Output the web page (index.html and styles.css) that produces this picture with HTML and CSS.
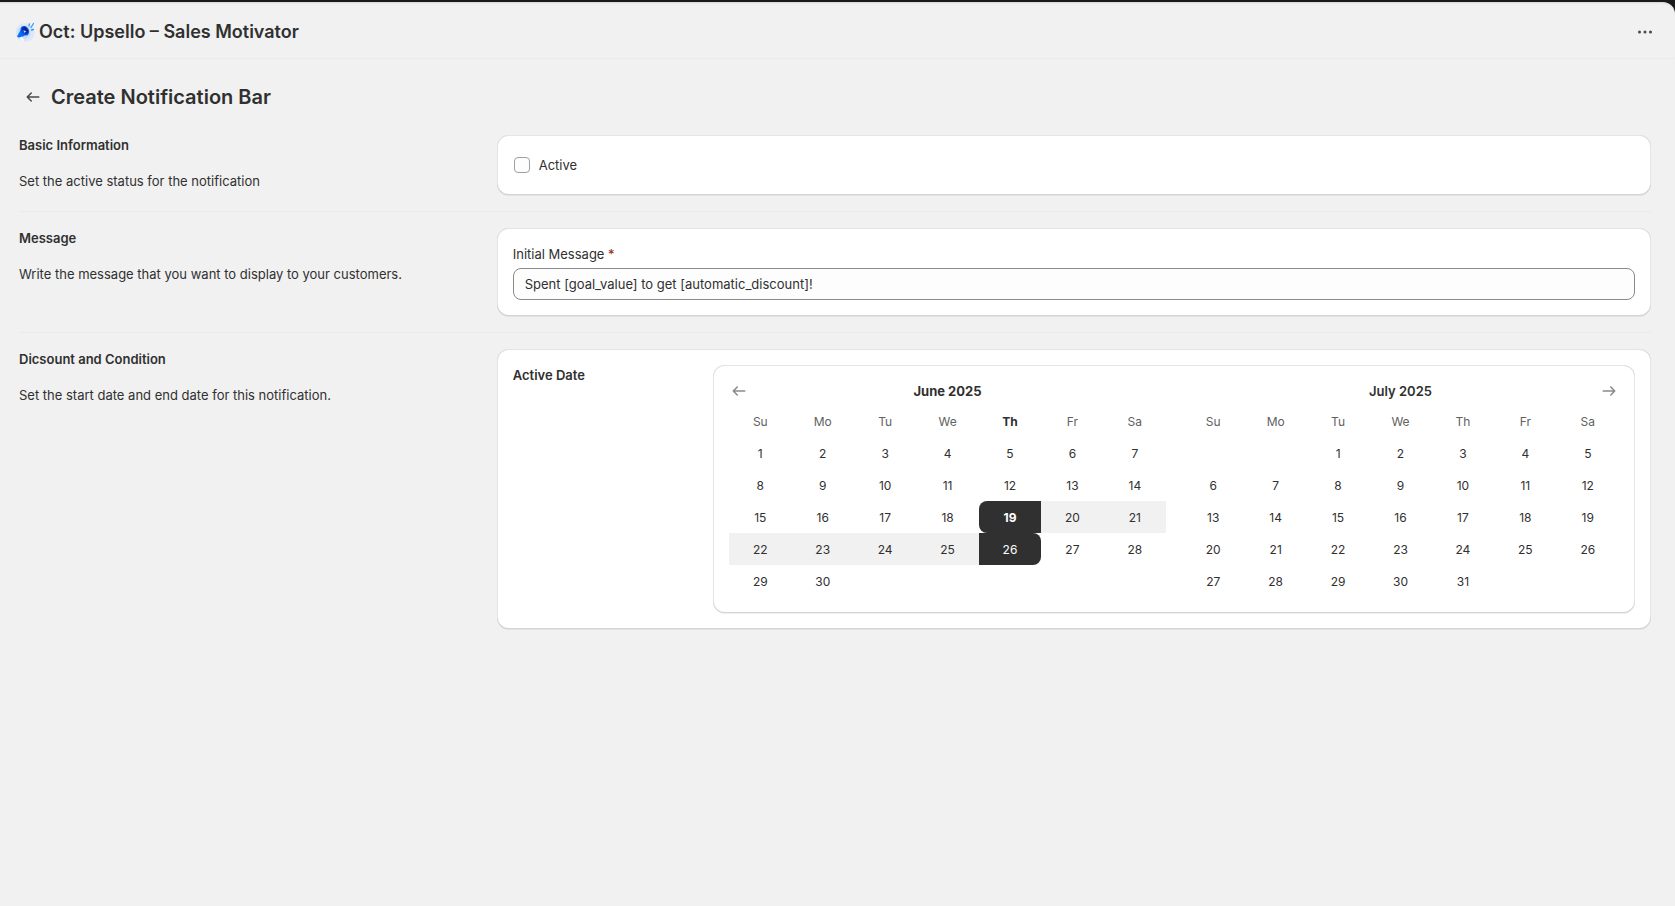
FILE: index.html
```html
<!DOCTYPE html>
<html lang="en">
<head>
    <meta charset="UTF-8">
    <meta name="viewport" content="width=device-width, initial-scale=1.0">
    <title>Create Notification Bar</title>
    <link rel="stylesheet" href="styles.css">
</head>
<body>
    <div class="frame">
        <header class="title-bar">
            <svg class="app-icon" viewBox="0 0 20 20" aria-hidden="true">
                <circle cx="10" cy="10.5" r="9.5" fill="#dce7fa"/>
                <circle cx="9" cy="10.5" r="6.5" fill="#c3d9fb"/>
                <path d="M2 14.500 7.500 5l6 8-4 .5-2.500 1.500-3.500.5z" fill="#0b6cf5"/>
                <ellipse cx="9.800" cy="8.600" rx="3.900" ry="5" transform="rotate(-36 9.800 8.600)" fill="#0b55e6"/>
                <ellipse cx="10.200" cy="8.300" rx="2.500" ry="3.700" transform="rotate(-36 10.200 8.300)" fill="#062a9c"/>
                <path d="m8.500 8 2.800 1.800-2.300 1z" fill="#cfe0ff"/>
                <path d="M4.500 16 7 14.500l2 3.500-1.500 1.500z" fill="#fff"/>
                <path d="m14 4 .3-2M16 5.500l2.500-4M16.500 8l2-.5" stroke="#3b96f7" stroke-width="1.300" stroke-linecap="round" fill="none"/>
            </svg>
            <span class="app-name">Oct: Upsello – Sales Motivator</span>
            <button type="button" class="icon-btn more-btn" aria-label="More actions">
                <svg viewBox="0 0 20 20"><circle cx="4.500" cy="10" r="1.500"/><circle cx="10" cy="10" r="1.500"/><circle cx="15.500" cy="10" r="1.500"/></svg>
            </button>
        </header>

        <main class="page">
            <div class="page-header">
                <a href="#notifications" class="icon-btn" aria-label="Back">
                    <svg viewBox="0 0 20 20"><path d="M16.5 10a.75.75 0 0 1-.75.75h-9.69l2.72 2.72a.75.75 0 0 1-1.060 1.060l-4-4a.75.75 0 0 1 0-1.060l4-4a.75.75 0 1 1 1.060 1.060l-2.72 2.72h9.69a.75.75 0 0 1 .75.75Z"/></svg>
                </a>
                <h1>Create Notification Bar</h1>
            </div>

            <section class="section">
                <div class="section-info">
                    <h2>Basic Information</h2>
                    <p>Set the active status for the notification</p>
                </div>
                <div class="card">
                    <label class="choice" for="active">
                        <input type="checkbox" id="active">
                        <span>Active</span>
                    </label>
                </div>
            </section>

            <section class="section">
                <div class="section-info">
                    <h2>Message</h2>
                    <p>Write the message that you want to display to your customers.</p>
                </div>
                <div class="card">
                    <label class="field-label" for="message">Initial Message <span class="required">*</span></label>
                    <input type="text" class="text-field" id="message" value="Spent [goal_value] to get [automatic_discount]!">
                </div>
            </section>

            <section class="section">
                <div class="section-info">
                    <h2>Dicsount and Condition</h2>
                    <p>Set the start date and end date for this notification.</p>
                </div>
                <div class="card date-row">
                    <h3>Active Date</h3>
                    <div class="card date-picker">
                        <div class="month">
                            <div class="month-header">
                                <button type="button" class="icon-btn nav-btn" aria-label="Previous month">
                                    <svg viewBox="0 0 20 20"><path d="M16.5 10a.75.75 0 0 1-.75.75h-9.69l2.72 2.72a.75.75 0 0 1-1.060 1.060l-4-4a.75.75 0 0 1 0-1.060l4-4a.75.75 0 1 1 1.060 1.060l-2.72 2.72h9.69a.75.75 0 0 1 .75.75Z"/></svg>
                                </button>
                                <span class="month-title current">June 2025</span>
                            </div>
                            <table>
                                <thead>
                                    <tr><th>Su</th><th>Mo</th><th>Tu</th><th>We</th><th class="current">Th</th><th>Fr</th><th>Sa</th></tr>
                                </thead>
                                <tbody>
                                    <tr>
                                        <td><button type="button">1</button></td>
                                        <td><button type="button">2</button></td>
                                        <td><button type="button">3</button></td>
                                        <td><button type="button">4</button></td>
                                        <td><button type="button">5</button></td>
                                        <td><button type="button">6</button></td>
                                        <td><button type="button">7</button></td>
                                    </tr>
                                    <tr>
                                        <td><button type="button">8</button></td>
                                        <td><button type="button">9</button></td>
                                        <td><button type="button">10</button></td>
                                        <td><button type="button">11</button></td>
                                        <td><button type="button">12</button></td>
                                        <td><button type="button">13</button></td>
                                        <td><button type="button">14</button></td>
                                    </tr>
                                    <tr>
                                        <td><button type="button">15</button></td>
                                        <td><button type="button">16</button></td>
                                        <td><button type="button">17</button></td>
                                        <td><button type="button">18</button></td>
                                        <td><button type="button" class="selected range-start today">19</button></td>
                                        <td><button type="button" class="in-range">20</button></td>
                                        <td><button type="button" class="in-range">21</button></td>
                                    </tr>
                                    <tr>
                                        <td><button type="button" class="in-range">22</button></td>
                                        <td><button type="button" class="in-range">23</button></td>
                                        <td><button type="button" class="in-range">24</button></td>
                                        <td><button type="button" class="in-range">25</button></td>
                                        <td><button type="button" class="selected range-end">26</button></td>
                                        <td><button type="button">27</button></td>
                                        <td><button type="button">28</button></td>
                                    </tr>
                                    <tr>
                                        <td><button type="button">29</button></td>
                                        <td><button type="button">30</button></td>
                                        <td></td><td></td><td></td><td></td><td></td>
                                    </tr>
                                </tbody>
                            </table>
                        </div>

                        <div class="month">
                            <div class="month-header">
                                <span class="month-title">July 2025</span>
                                <button type="button" class="icon-btn nav-btn next" aria-label="Next month">
                                    <svg viewBox="0 0 20 20"><path d="M3.5 10a.75.75 0 0 1 .75-.75h9.69l-2.72-2.72a.75.75 0 1 1 1.060-1.060l4 4a.75.75 0 0 1 0 1.060l-4 4a.75.75 0 0 1-1.060-1.060l2.72-2.72h-9.69a.75.75 0 0 1-.75-.75Z"/></svg>
                                </button>
                            </div>
                            <table>
                                <thead>
                                    <tr><th>Su</th><th>Mo</th><th>Tu</th><th>We</th><th>Th</th><th>Fr</th><th>Sa</th></tr>
                                </thead>
                                <tbody>
                                    <tr>
                                        <td></td><td></td>
                                        <td><button type="button">1</button></td>
                                        <td><button type="button">2</button></td>
                                        <td><button type="button">3</button></td>
                                        <td><button type="button">4</button></td>
                                        <td><button type="button">5</button></td>
                                    </tr>
                                    <tr>
                                        <td><button type="button">6</button></td>
                                        <td><button type="button">7</button></td>
                                        <td><button type="button">8</button></td>
                                        <td><button type="button">9</button></td>
                                        <td><button type="button">10</button></td>
                                        <td><button type="button">11</button></td>
                                        <td><button type="button">12</button></td>
                                    </tr>
                                    <tr>
                                        <td><button type="button">13</button></td>
                                        <td><button type="button">14</button></td>
                                        <td><button type="button">15</button></td>
                                        <td><button type="button">16</button></td>
                                        <td><button type="button">17</button></td>
                                        <td><button type="button">18</button></td>
                                        <td><button type="button">19</button></td>
                                    </tr>
                                    <tr>
                                        <td><button type="button">20</button></td>
                                        <td><button type="button">21</button></td>
                                        <td><button type="button">22</button></td>
                                        <td><button type="button">23</button></td>
                                        <td><button type="button">24</button></td>
                                        <td><button type="button">25</button></td>
                                        <td><button type="button">26</button></td>
                                    </tr>
                                    <tr>
                                        <td><button type="button">27</button></td>
                                        <td><button type="button">28</button></td>
                                        <td><button type="button">29</button></td>
                                        <td><button type="button">30</button></td>
                                        <td><button type="button">31</button></td>
                                        <td></td><td></td>
                                    </tr>
                                </tbody>
                            </table>
                        </div>
                    </div>
                </div>
            </section>
        </main>
    </div>
</body>
</html>
```
FILE: styles.css
```css
* {
    margin: 0;
    padding: 0;
    box-sizing: border-box;
}

body {
    background-color: #1a1a1a;
    color: #303030;
    font-family: Inter, sans-serif;
    font-size: 13px;
    line-height: 20px;
    padding-top: 2px;
}

button,
input {
    font: inherit;
    color: inherit;
}

.frame {
    min-height: calc(100vh - 2px);
    background-color: #f1f1f1;
    border-top-right-radius: 12px;
}

/* Title bar */
.title-bar {
    display: flex;
    align-items: center;
    height: 57px;
    padding: 4px 16px 0 15px;
    border-bottom: 1px solid #ebebeb;
    border-top-right-radius: 12px;
    box-shadow: inset 0 2px 2px -1px rgba(0, 0, 0, 0.12);
}

.app-icon {
    width: 20px;
    height: 20px;
    margin-right: 4px;
}

.app-name {
    font-size: 18px;
    font-weight: 600;
    line-height: 24px;
}

.icon-btn {
    display: flex;
    padding: 4px;
    border: none;
    border-radius: 8px;
    background: none;
    cursor: pointer;
}

.icon-btn svg {
    width: 20px;
    height: 20px;
    fill: #4a4a4a;
}

.icon-btn:hover {
    background-color: rgba(0, 0, 0, 0.05);
}

.more-btn {
    margin-left: auto;
}

/* Page */
.page {
    padding: 24px 24px 24px 19px;
}

.page-header {
    display: flex;
    align-items: center;
    gap: 4px;
    margin-bottom: 24px;
}

h1 {
    font-size: 20px;
    font-weight: 600;
    line-height: 28px;
}

h2,
h3 {
    font-size: 13px;
    font-weight: 600;
    line-height: 20px;
}

.section {
    display: grid;
    grid-template-columns: 2fr 5fr;
    gap: 16px;
}

.section + .section {
    margin-top: 16px;
    padding-top: 16px;
    border-top: 1px solid #ebebeb;
}

.section-info p {
    margin-top: 16px;
}

.card {
    padding: 16px;
    border-radius: 12px;
    background-color: #fff;
    box-shadow: 0 1px 0 0 rgba(26, 26, 26, 0.07),
        inset 1px 0 0 0 rgba(204, 204, 204, 0.5),
        inset -1px 0 0 0 rgba(204, 204, 204, 0.5),
        inset 0 -1px 0 0 rgba(0, 0, 0, 0.17),
        inset 0 1px 0 0 rgba(204, 204, 204, 0.5);
}

/* Form controls */
.choice {
    display: flex;
    align-items: center;
    gap: 8px;
    padding: 4px 0;
}

.choice input {
    appearance: none;
    width: 16px;
    height: 16px;
    margin: 1px;
    border: 1px solid #a0a0a0;
    border-radius: 4px;
    background-color: #fdfdfd;
}

.choice input:checked {
    background-color: #303030;
}

.field-label {
    display: block;
    margin-bottom: 4px;
}

.required {
    color: #8e1f0b;
}

.text-field {
    display: block;
    width: 100%;
    height: 32px;
    padding: 0 11px;
    border: 1px solid #8a8a8a;
    border-radius: 8px;
    background-color: #fdfdfd;
}

/* Date picker */
.date-row {
    display: grid;
    grid-template-columns: 1fr 5fr;
    gap: 16px;
}

.date-picker {
    display: grid;
    grid-template-columns: 1fr 1fr;
    gap: 16px;
}

.month-header {
    display: grid;
    grid-template-columns: 20px 1fr 20px;
    margin-bottom: 4px;
}

.month-title {
    grid-column: 2;
    font-weight: 600;
    text-align: center;
}

.month-title.current {
    font-weight: 700;
}

.nav-btn {
    padding: 0;
}

.nav-btn.next {
    grid-column: 3;
}

.nav-btn svg {
    fill: #8a8a8a;
}

table {
    width: 100%;
    table-layout: fixed;
    border-collapse: collapse;
    font-size: 12px;
    line-height: 16px;
}

th {
    height: 32px;
    padding-top: 2px;
    color: #616161;
    font-weight: 400;
    text-align: center;
}

th.current {
    color: #303030;
    font-weight: 700;
}

td {
    height: 32px;
}

td button {
    display: block;
    width: 100%;
    height: 32px;
    padding-top: 2px;
    border: none;
    background: none;
    text-align: center;
    cursor: pointer;
}

td .in-range {
    background-color: #f1f1f1;
}

td .selected {
    background-color: #303030;
    color: #fff;
}

td .range-start {
    border-radius: 8px 0 0 8px;
}

td .range-end {
    border-radius: 0 8px 8px 0;
}

td .today {
    font-weight: 700;
}
```
